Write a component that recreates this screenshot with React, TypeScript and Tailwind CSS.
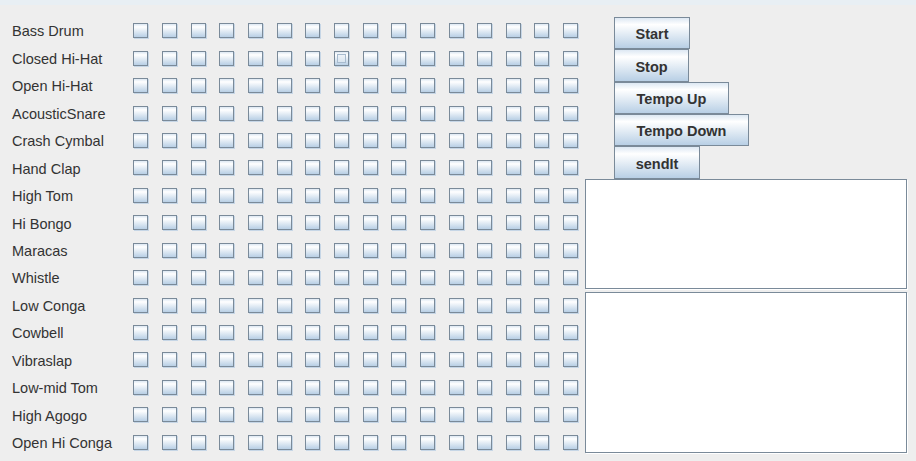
import React from 'react'

const instruments = [
  'Bass Drum',
  'Closed Hi-Hat',
  'Open Hi-Hat',
  'AcousticSnare',
  'Crash Cymbal',
  'Hand Clap',
  'High Tom',
  'Hi Bongo',
  'Maracas',
  'Whistle',
  'Low Conga',
  'Cowbell',
  'Vibraslap',
  'Low-mid Tom',
  'High Agogo',
  'Open Hi Conga',
]

const buttons = [
  { name: 'Start', width: 'w-[76px]' },
  { name: 'Stop', width: 'w-[75px]' },
  { name: 'Tempo Up', width: 'w-[115px]' },
  { name: 'Tempo Down', width: 'w-[135px]' },
  { name: 'sendIt', width: 'w-[86px]' },
]

const beats = Array.from({ length: 16 }, (_, i) => i)

function Checkbox({ rollover }: { rollover?: boolean }) {
  return (
    <div className="relative h-[15px] w-[15px] border border-[#7a8a99] bg-[linear-gradient(to_bottom,#dde8f3_0%,#ffffff_22%,#b8cfe5_100%)] shadow-[1px_1px_0_#c6d6e6]">
      {rollover && (
        <div className="absolute inset-[2px] border border-[#a7bbcf] bg-[linear-gradient(to_bottom,#eef3f8,#d9e5f0)]" />
      )}
    </div>
  )
}

export default function App() {
  return (
    <div className="h-[461px] w-[916px] overflow-hidden bg-[#eeeeee] font-['Liberation_Sans',Arial,sans-serif] text-[#333333]">
      <div className="h-[5px] bg-[#e8eff4]" />
      <div className="flex">
        {/* instrument grid */}
        <div className="w-[585px] pl-3 pt-[12px]">
          {instruments.map((name, row) => (
            <div key={name} className="flex h-[27.45px] items-center">
              <div className="w-[115px] pt-[2px] text-[14.5px] leading-none">{name}</div>
              {beats.map((b) => (
                <div key={b} className="flex w-[28.8px] justify-center">
                  <Checkbox rollover={row === 1 && b === 7} />
                </div>
              ))}
            </div>
          ))}
        </div>

        {/* controls */}
        <div className="flex w-[323px] flex-col pt-[12px]">
          {buttons.map((btn) => (
            <div key={btn.name} className="pl-[29px]">
              <button
                className={`${btn.width} flex h-[32.35px] items-center justify-center border border-[#7a8a99] bg-[linear-gradient(to_bottom,#dde8f3_0%,#ffffff_22%,#b8cfe5_100%)] pt-[3px] text-[14.5px] font-bold leading-none text-[#333333]`}
              >
                {btn.name}
              </button>
            </div>
          ))}
          <div className="h-[110px] w-[322px] border border-[#7a8a99] bg-white shadow-[1px_1px_0_#ffffff]" />
          <div className="mt-[3px] h-[161px] w-[322px] border border-[#7a8a99] bg-white shadow-[1px_1px_0_#ffffff]" />
        </div>
      </div>
    </div>
  )
}
